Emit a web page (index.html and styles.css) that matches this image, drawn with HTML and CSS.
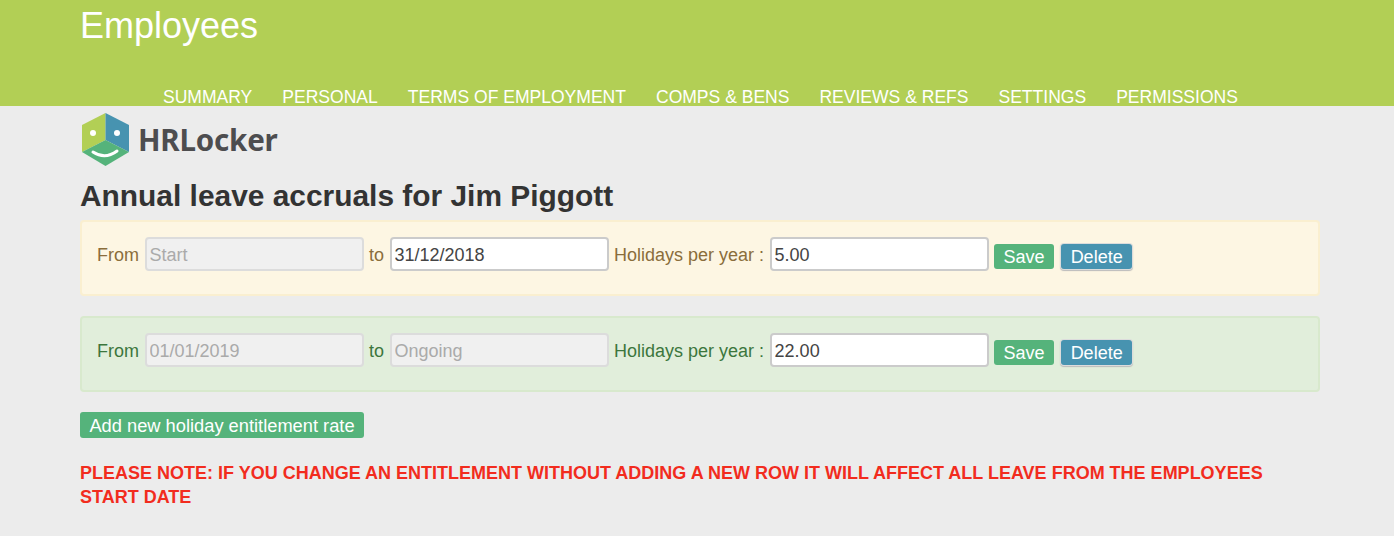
FILE: index.html
```html
<!DOCTYPE html>
<html lang="en">

<head>
    <meta charset="UTF-8">
    <title>Employees</title>
    <link rel="stylesheet" href="styles.css">
</head>

<body>
    <header class="page-header">
        <div class="container">
            <h1 class="page-title">Employees</h1>
            <nav class="tabs">
                <a href="#">SUMMARY</a>
                <a href="#">PERSONAL</a>
                <a href="#">TERMS OF EMPLOYMENT</a>
                <a href="#">COMPS &amp; BENS</a>
                <a href="#">REVIEWS &amp; REFS</a>
                <a href="#">SETTINGS</a>
                <a href="#">PERMISSIONS</a>
            </nav>
        </div>
    </header>

    <main class="container">
        <div class="logo">
            <svg class="logo-mark" width="50" height="56" viewBox="0 0 50 56">
                <polygon points="24.5,1 1,13 1,40 24.5,28" fill="#b2cf55"/>
                <polygon points="24.5,1 48,13 48,40 24.5,28" fill="#4793b0"/>
                <polygon points="24.5,28 1,40 24.5,54 48,40" fill="#55b37b"/>
                <circle cx="12" cy="21" r="3" fill="#fff"/>
                <circle cx="36" cy="21" r="3" fill="#fff"/>
                <path d="M12 40 Q24 48 36 39" fill="none" stroke="#fff" stroke-width="3" stroke-linecap="round"/>
            </svg>
            <span class="logo-text">HRLocker</span>
        </div>

        <h2 class="section-title">Annual leave accruals for Jim Piggott</h2>

        <form class="accrual accrual-warning">
            <label>From</label>
            <input type="text" value="Start" disabled>
            <label>to</label>
            <input type="text" value="31/12/2018">
            <label>Holidays per year :</label>
            <input type="text" value="5.00">
            <button type="button" class="btn btn-save">Save</button>
            <button type="button" class="btn btn-delete">Delete</button>
        </form>

        <form class="accrual accrual-success">
            <label>From</label>
            <input type="text" value="01/01/2019" disabled>
            <label>to</label>
            <input type="text" value="Ongoing" disabled>
            <label>Holidays per year :</label>
            <input type="text" value="22.00">
            <button type="button" class="btn btn-save">Save</button>
            <button type="button" class="btn btn-delete">Delete</button>
        </form>

        <button type="button" class="btn btn-save btn-add">Add new holiday entitlement rate</button>

        <p class="note">PLEASE NOTE: IF YOU CHANGE AN ENTITLEMENT WITHOUT ADDING A NEW ROW IT WILL AFFECT ALL LEAVE FROM THE EMPLOYEES START DATE</p>
    </main>
</body>

</html>
```

FILE: styles.css
```css
body {
    margin: 0;
    font-family: "Liberation Sans", Arial, sans-serif;
    background-color: #ececec;
    color: #333;
}

.container {
    width: 1240px;
    margin: 0 auto 0 80px;
}

.page-header {
    background-color: #b2cf55;
    height: 106px;
    overflow: hidden;
}

.page-title {
    margin: 0;
    padding-top: 5px;
    height: 83px;
    box-sizing: border-box;
    font-size: 36px;
    line-height: 41px;
    font-weight: normal;
    color: white;
}

.tabs {
    display: flex;
    gap: 30px;
    padding-left: 83px;
}

.tabs a {
    font-size: 17.55px;
    line-height: 29px;
    color: white;
    text-decoration: none;
    white-space: nowrap;
}

.logo {
    display: flex;
    align-items: center;
    gap: 8px;
    height: 66px;
}

.logo-mark {
    margin-left: 1px;
    margin-top: 1px;
}

.logo-text {
    font-family: "Noto Sans", sans-serif;
    font-size: 29.5px;
    font-weight: bold;
    color: #4d4d4f;
    margin-left: -1px;
    letter-spacing: -0.2px;
}

.section-title {
    margin: 0;
    font-size: 29.9px;
    line-height: 48px;
    font-weight: bold;
}

.accrual {
    display: flex;
    align-items: flex-start;
    box-sizing: border-box;
    height: 76px;
    margin-bottom: 20px;
    padding: 15px;
    border: 2px solid;
    border-radius: 4px;
    font-size: 18px;
}

.accrual-warning {
    background-color: #fdf6e3;
    border-color: #faefd0;
    color: #8a6d3b;
}

.accrual-success {
    background-color: #e1eedb;
    border-color: #d8e9cd;
    color: #3c763d;
}

.accrual label {
    line-height: 36px;
    white-space: nowrap;
    margin-right: 5.5px;
}

.accrual input {
    box-sizing: border-box;
    width: 219.5px;
    height: 34px;
    margin-right: 5px;
    padding: 2px 3px 0;
    border: 2px solid #cbcbcb;
    border-radius: 4px;
    background-color: white;
    font-family: inherit;
    font-size: 18px;
    color: #444;
}

.accrual input:disabled {
    background-color: #f0f0f0;
    border-color: #dcdcdc;
    color: #aaa;
}

.btn {
    box-sizing: border-box;
    height: 25px;
    padding: 2px 10px 0;
    border: 0;
    border-radius: 3px;
    font-family: inherit;
    font-size: 18px;
    color: white;
}

.accrual .btn {
    margin-top: 7px;
    margin-right: 7px;
    padding-left: 9.5px;
    padding-right: 9.5px;
}

.btn-save {
    background-color: #55b37b;
}

.btn-delete {
    background-color: #4793b0;
    box-shadow: 0 0 0 1px #dcdcdc, 0 1px 1px 1px #bbb;
}

.btn-add {
    display: block;
    width: 284px;
    height: 26px;
    padding: 2px 0 0;
    font-size: 18.3px;
}

.note {
    margin: 23px 0 0;
    padding-right: 30px;
    font-size: 18px;
    line-height: 24px;
    font-weight: bold;
    color: #f22c1e;
}
```
